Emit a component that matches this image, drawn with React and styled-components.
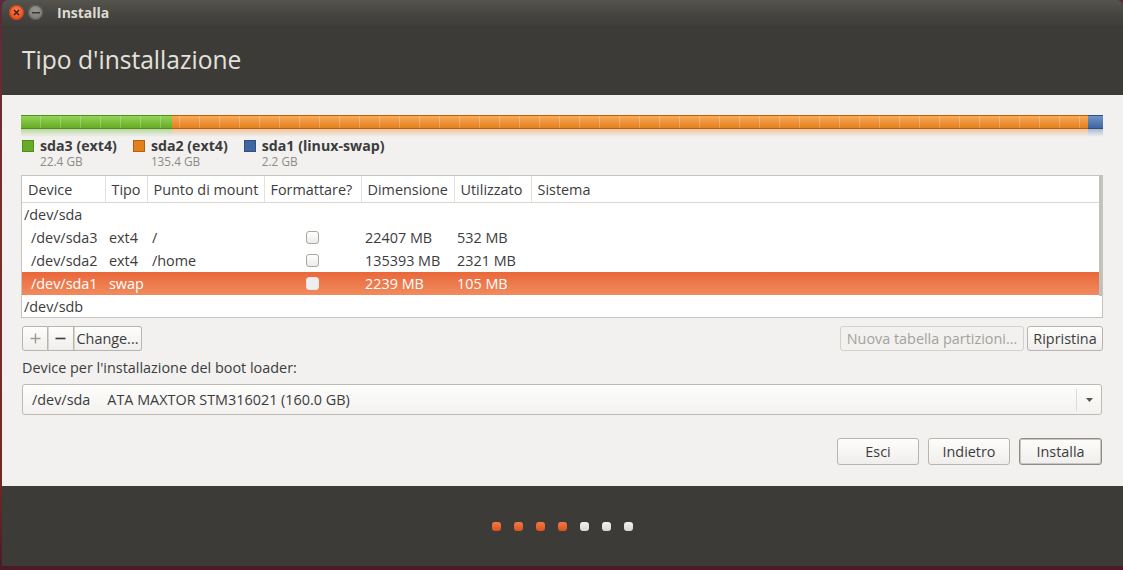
import React from "react";
import styled, { createGlobalStyle } from "styled-components";

const Global = createGlobalStyle`
  html, body { margin: 0; padding: 0; }
  body {
    background: #4a1f2c;
    font-family: "Open Sans", "Noto Sans", sans-serif;
    overflow: hidden;
  }
`;

const Desktop = styled.div`
  display: flex;
  width: 1123px;
  height: 570px;
  box-sizing: border-box;
  padding: 0 0 4px 2px;
  background: linear-gradient(to bottom, #5b2a3a 0%, #7a2e28 40%, #6d2a25 85%, #4a1a28 100%);
`;

const Window = styled.div`
  width: 1121px;
  height: 566px;
  display: flex;
  flex-direction: column;
  border-radius: 6px 6px 0 0;
  overflow: hidden;
  background: #3c3b37;
`;

const TitleBar = styled.div`
  height: 25px;
  display: flex;
  align-items: center;
  padding-left: 7px;
  gap: 4px;
  background: linear-gradient(to bottom, #55534d, #45443f 60%, #3f3e3a);
`;

const WinButton = styled.div`
  width: 15px;
  height: 15px;
  border-radius: 50%;
  display: flex;
  align-items: center;
  justify-content: center;
  background: ${(p) =>
    p.$close
      ? "radial-gradient(circle at 50% 35%, #f77d52, #e5501f 70%, #c8400f)"
      : "radial-gradient(circle at 50% 35%, #9a9893, #7c7a75 70%, #676560)"};
  box-shadow: inset 0 0 0 1px ${(p) => (p.$close ? "#b2441c" : "#5a5954")};
`;

const TitleText = styled.div`
  margin-left: 10px;
  color: #dfdbd2;
  font-weight: 700;
  font-size: 14px;
  line-height: 25px;
`;

const Header = styled.div`
  height: 70px;
  display: flex;
  align-items: center;
  padding-left: 20px;
  background: #3c3b37;
`;

const HeaderTitle = styled.h1`
  margin: 0;
  margin-top: -1px;
  font-weight: 400;
  font-size: 24.6px;
  color: #e4e2dd;
`;

const Content = styled.div`
  height: 391px;
  box-sizing: border-box;
  background: #f2f1f0;
  padding: 20px 20px 0 19px;
  display: flex;
  flex-direction: column;
  color: #3c3c3c;
  font-size: 14.4px;
`;

const BarBlock = styled.div`
  display: flex;
  flex-direction: column;
  height: 22px;
`;

const Bar = styled.div`
  display: flex;
  height: 14px;
`;

const palette = {
  green: { top: "#93d456", bottom: "#66ac27", edge: "#4f8d1d" },
  orange: { top: "#f9a956", bottom: "#e2801f", edge: "#b9600f" },
  blue: { top: "#6f94c8", bottom: "#3e67a2", edge: "#2e4f80" },
};

const Segment = styled.div`
  flex: ${(p) => p.$size} 1 0;
  box-sizing: border-box;
  border-top: 1px solid ${(p) => palette[p.$color].edge};
  border-bottom: 1px solid ${(p) => palette[p.$color].edge};
  background:
    repeating-linear-gradient(to right, transparent 0 ${(p) => p.$offset}px, rgba(255,255,255,0.22) ${(p) => p.$offset}px ${(p) => p.$offset + 1}px, transparent ${(p) => p.$offset + 1}px 20px),
    linear-gradient(to bottom, ${(p) => palette[p.$color].top}, ${(p) => palette[p.$color].bottom});
`;

const Reflection = styled.div`
  display: flex;
  height: 8px;
`;

const ReflectionSeg = styled.div`
  flex: ${(p) => p.$size} 1 0;
  background: linear-gradient(to bottom, ${(p) => palette[p.$color].bottom}66, ${(p) => palette[p.$color].bottom}00);
`;

const Legend = styled.div`
  display: flex;
  gap: 16px;
  margin-top: 1px;
  padding-left: 1px;
`;

const LegendItem = styled.div`
  display: grid;
  grid-template-columns: 12px auto;
  column-gap: 6px;
  align-items: center;
`;

const Swatch = styled.div`
  width: 12px;
  height: 12px;
  box-sizing: border-box;
  background: ${(p) => palette[p.$color].bottom};
  border: 1px solid ${(p) => palette[p.$color].edge};
`;

const LegendName = styled.div`
  font-weight: 700;
  font-size: 14.2px;
  line-height: 16px;
  color: #3c3c3c;
`;

const LegendSize = styled.div`
  grid-column: 2;
  font-size: 11.8px;
  line-height: 14px;
  color: #8c8a85;
`;

const TableWrap = styled.div`
  position: relative;
  margin-top: 7px;
  height: 143px;
  box-sizing: border-box;
  border: 1px solid #c6c4bf;
  background: #fff;
  overflow: hidden;
`;

const ScrollIndicator = styled.div`
  position: absolute;
  right: 0;
  top: 0;
  width: 3px;
  height: 120px;
  background: #c2c0bb;
`;

const Table = styled.table`
  width: 100%;
  border-collapse: collapse;
  table-layout: fixed;
  font-size: 14.4px;
  color: #3c3c3c;
`;

const Th = styled.th`
  height: 26px;
  padding: 0 0 0 6px;
  text-align: left;
  font-weight: 400;
  white-space: nowrap;
  overflow: hidden;
  border-bottom: 1px solid #d9d7d2;
  border-left: ${(p) => (p.$first ? "none" : "1px solid #e3e1dc")};
  color: #3c3c3c;
`;

const Tr = styled.tr`
  height: 23px;
  color: ${(p) => (p.$selected ? "#ffffff" : "#3c3c3c")};
  background: ${(p) =>
    p.$selected ? "linear-gradient(to bottom, #e9683a, #f08b5e)" : "transparent"};
`;

const Td = styled.td`
  padding: 0 0 0 ${(p) => p.$pad ?? 4}px;
  white-space: nowrap;
  vertical-align: middle;
`;

const Check = styled.div`
  width: 13px;
  height: 13px;
  box-sizing: border-box;
  margin-left: 42px;
  border-radius: 3px;
  border: 1px solid ${(p) => (p.$light ? "#e7e5e2" : "#a9a7a2")};
  background: ${(p) => (p.$light ? "#eeeeee" : "linear-gradient(to bottom, #ffffff, #ecebe9)")};
`;

const ButtonRow = styled.div`
  display: flex;
  justify-content: space-between;
  margin-top: 8px;
  height: 25px;
  padding-left: 1px;
`;

const Group = styled.div`
  display: flex;
  gap: 3px;
`;

const Linked = styled.div`
  display: flex;
`;

const Btn = styled.button`
  height: ${(p) => p.$h || 25}px;
  box-sizing: border-box;
  padding: 0;
  font-family: inherit;
  font-size: 14.4px;
  color: ${(p) => (p.$disabled ? "#a3a19c" : "#3c3c3c")};
  border: 1px solid ${(p) => (p.$disabled ? "#d3d1cc" : "#b8b5af")};
  background: ${(p) =>
    p.$disabled ? "#f2f1f0" : "linear-gradient(to bottom, #fdfdfc, #efeeec)"};
  border-radius: 3px;
  display: flex;
  align-items: center;
  justify-content: center;
  white-space: nowrap;
  ${(p) => (p.$width ? `width: ${p.$width}px;` : "")}
`;

const LinkedBtn = styled(Btn)`
  border-radius: ${(p) => (p.$pos === "first" ? "3px 0 0 3px" : p.$pos === "last" ? "0 3px 3px 0" : "0")};
  ${(p) => (p.$pos !== "first" ? "border-left: none;" : "")}
  ${(p) => (p.$pos !== "first" ? "box-shadow: inset 1px 0 0 #d6d4cf;" : "")}
`;

const Label = styled.div`
  margin-top: 8px;
  line-height: 18px;
  padding-left: 1px;
`;

const Combo = styled.div`
  margin-top: 7px;
  height: 31px;
  box-sizing: border-box;
  border: 1px solid #bdbab4;
  border-radius: 3px;
  background: linear-gradient(to bottom, #fdfdfc, #f3f2f0);
  display: flex;
  align-items: center;
  margin-left: 1px;
  margin-right: 1px;
`;

const ComboText = styled.div`
  flex: 1;
  display: flex;
  gap: 17px;
  padding-left: 9px;
`;

const ComboArrow = styled.div`
  width: 24px;
  height: 22px;
  border-left: 1px solid #dddbd6;
  display: flex;
  align-items: center;
  justify-content: center;
`;

const Actions = styled.div`
  margin-top: 23px;
  display: flex;
  justify-content: flex-end;
  gap: 9px;
  margin-right: 1px;
`;

const DefaultBtn = styled(Btn)`
  border: 1px solid #8f8c86;
  box-shadow: inset 0 0 0 1px #c9c6c0;
`;

const Footer = styled.div`
  flex: 1;
  background: #3c3b37;
  display: flex;
  align-items: center;
  justify-content: center;
  gap: 13px;
  padding-top: 1px;
`;

const Dot = styled.div`
  width: 9px;
  height: 9px;
  border-radius: 3px;
  background: ${(p) =>
    p.$done
      ? "linear-gradient(to bottom, #f57a45, #d9521e)"
      : "linear-gradient(to bottom, #f2f2f2, #d6d6d6)"};
`;

const segments = [
  { color: "green", size: 22.4, offset: 19, name: "sda3 (ext4)", label: "22.4 GB" },
  { color: "orange", size: 135.4, offset: 7, name: "sda2 (ext4)", label: "135.4 GB" },
  { color: "blue", size: 2.2, offset: 19, name: "sda1 (linux-swap)", label: "2.2 GB" },
];

const columns = [
  { label: "Device", width: 83 },
  { label: "Tipo", width: 42 },
  { label: "Punto di mount", width: 117 },
  { label: "Formattare?", width: 97 },
  { label: "Dimensione", width: 93 },
  { label: "Utilizzato", width: 77 },
  { label: "Sistema" },
];

const rows = [
  { device: "/dev/sda", top: true },
  { device: "/dev/sda3", type: "ext4", mount: "/", size: "22407 MB", used: "532 MB" },
  { device: "/dev/sda2", type: "ext4", mount: "/home", size: "135393 MB", used: "2321 MB" },
  { device: "/dev/sda1", type: "swap", mount: "", size: "2239 MB", used: "105 MB", selected: true },
  { device: "/dev/sdb", top: true },
];

export default function App() {
  return (
    <>
      <Global />
      <Desktop>
        <Window>
          <TitleBar>
            <WinButton $close>
              <svg width="7" height="7" viewBox="0 0 7 7">
                <path d="M1 1 L6 6 M6 1 L1 6" stroke="#3b1a0e" strokeWidth="1.3" />
              </svg>
            </WinButton>
            <WinButton>
              <svg width="8" height="2" viewBox="0 0 8 2">
                <rect x="0" y="0" width="8" height="1.5" fill="#3a3935" />
              </svg>
            </WinButton>
            <TitleText>Installa</TitleText>
          </TitleBar>
          <Header>
            <HeaderTitle>Tipo d'installazione</HeaderTitle>
          </Header>
          <Content>
            <BarBlock>
              <Bar>
                {segments.map((s) => (
                  <Segment key={s.name} $color={s.color} $size={s.size} $offset={s.offset} />
                ))}
              </Bar>
              <Reflection>
                {segments.map((s) => (
                  <ReflectionSeg key={s.name} $color={s.color} $size={s.size} />
                ))}
              </Reflection>
            </BarBlock>
            <Legend>
              {segments.map((s) => (
                <LegendItem key={s.name}>
                  <Swatch $color={s.color} />
                  <LegendName>{s.name}</LegendName>
                  <LegendSize>{s.label}</LegendSize>
                </LegendItem>
              ))}
            </Legend>
            <TableWrap>
              <Table>
                <colgroup>
                  {columns.map((c) => (
                    <col key={c.label} style={c.width ? { width: c.width } : undefined} />
                  ))}
                </colgroup>
                <thead>
                  <tr>
                    {columns.map((c, i) => (
                      <Th key={c.label} $first={i === 0}>
                        {c.label}
                      </Th>
                    ))}
                  </tr>
                </thead>
                <tbody>
                  {rows.map((r) => (
                    <Tr key={r.device} $selected={r.selected}>
                      <Td $pad={r.top ? 2 : 9}>{r.device}</Td>
                      <Td>{r.type}</Td>
                      <Td $pad={5}>{r.mount}</Td>
                      <Td $pad={0}>{!r.top && <Check $light={r.selected} />}</Td>
                      <Td>{r.size}</Td>
                      <Td $pad={3}>{r.used}</Td>
                      <Td />
                    </Tr>
                  ))}
                </tbody>
              </Table>
              <ScrollIndicator />
            </TableWrap>
            <ButtonRow>
              <Linked>
                <LinkedBtn $pos="first" $width={26}>
                  <svg width="11" height="11" viewBox="0 0 11 11">
                    <path d="M5.5 0.5 V10.5 M0.5 5.5 H10.5" stroke="#9c9a95" strokeWidth="1.4" />
                  </svg>
                </LinkedBtn>
                <LinkedBtn $pos="mid" $width={26}>
                  <svg width="11" height="11" viewBox="0 0 11 11">
                    <path d="M0.5 5.5 H10.5" stroke="#3c3c3c" strokeWidth="1.6" />
                  </svg>
                </LinkedBtn>
                <LinkedBtn $pos="last" $width={68}>
                  Change...
                </LinkedBtn>
              </Linked>
              <Group>
                <Btn $disabled $width={184}>Nuova tabella partizioni...</Btn>
                <Btn $width={76}>Ripristina</Btn>
              </Group>
            </ButtonRow>
            <Label>Device per l'installazione del boot loader:</Label>
            <Combo>
              <ComboText>
                <span>/dev/sda</span>
                <span>ATA MAXTOR STM316021 (160.0 GB)</span>
              </ComboText>
              <ComboArrow>
                <svg width="7" height="4" viewBox="0 0 7 4">
                  <path d="M0 0 H7 L3.5 4 Z" fill="#555" />
                </svg>
              </ComboArrow>
            </Combo>
            <Actions>
              <Btn $width={82} $h={27}>Esci</Btn>
              <Btn $width={82} $h={27}>Indietro</Btn>
              <DefaultBtn $width={83} $h={27}>Installa</DefaultBtn>
            </Actions>
          </Content>
          <Footer>
            {[true, true, true, true, false, false, false].map((d, i) => (
              <Dot key={i} $done={d} />
            ))}
          </Footer>
        </Window>
      </Desktop>
    </>
  );
}
